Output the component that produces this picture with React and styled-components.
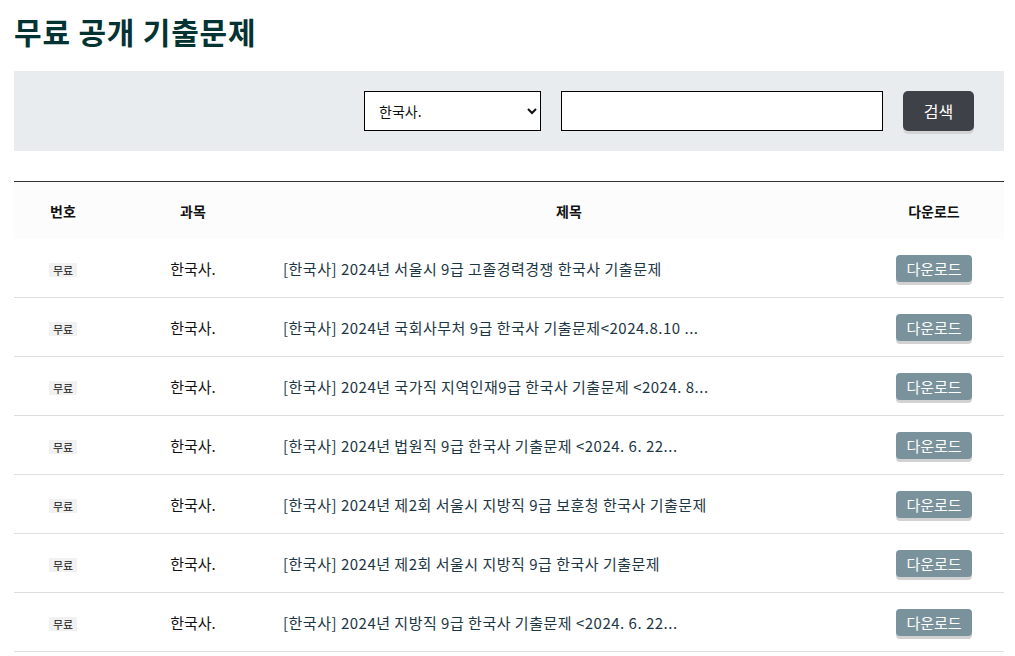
import React, { useState } from "react";
import styled, { createGlobalStyle } from "styled-components";

const GlobalStyle = createGlobalStyle`
  body {
    margin: 0;
    background: #fff;
    font-family: "Noto Sans CJK KR", "Noto Sans", sans-serif;
    color: #111;
  }
`;

const Page = styled.div`
  padding: 11px 11px 0 14px;
`;

const Title = styled.h1`
  margin: 0 0 20px 0;
  font-size: 30px;
  line-height: 40px;
  font-weight: 700;
  color: #033333;
  letter-spacing: 0.8px;
`;

const SearchBar = styled.form`
  display: flex;
  justify-content: flex-end;
  align-items: center;
  gap: 20px;
  height: 80px;
  padding: 0 30px 0 0;
  background: #e9ecef;
`;

const Select = styled.select`
  width: 177px;
  height: 40px;
  padding: 0 10px;
  border: 1px solid #000;
  border-radius: 0;
  background: #fff;
  font-family: inherit;
  font-size: 14px;
  color: #111;
`;

const SearchInput = styled.input`
  box-sizing: border-box;
  width: 322px;
  height: 40px;
  border: 1px solid #000;
  background: #fff;
`;

const SearchButton = styled.button`
  width: 71px;
  height: 40px;
  border: none;
  border-radius: 5px;
  background: #3f4148;
  color: #fff;
  font-family: inherit;
  font-size: 16px;
  box-shadow: 0 3px 0 #d4d4d4;
`;

const Table = styled.table`
  width: 100%;
  margin-top: 30px;
  border-collapse: collapse;
  border-top: 1px solid #333;
  table-layout: fixed;
`;

const Th = styled.th`
  width: ${(p) => p.w || "auto"};
  height: 57px;
  padding: 0;
  background: #fcfcfc;
  font-size: 14px;
  font-weight: 700;
  color: #111;
  text-align: center;
`;

const Tr = styled.tr`
  border-bottom: 1px solid #dedede;
`;

const Td = styled.td`
  height: 58px;
  padding: 0;
  text-align: ${(p) => p.align || "center"};
  font-size: 15px;
  font-weight: 400;
  color: #111;
`;

const Badge = styled.span`
  display: inline-block;
  padding: 0 4px;
  background: #f1f1f1;
  font-size: 11px;
  line-height: 14px;
  color: #111;
`;

const Link = styled.a`
  display: block;
  padding-left: 9px;
  font-size: 15px;
  letter-spacing: 0.5px;
  color: #1c3644;
  text-decoration: none;
  white-space: nowrap;
  overflow: hidden;
`;

const DownloadButton = styled.button`
  height: 27px;
  padding: 0 10px;
  border: none;
  border-radius: 4px;
  background: #7a929c;
  color: #fff;
  font-family: inherit;
  font-size: 15px;
  line-height: 27px;
  box-shadow: 0 3px 0 #d2d2d2;
`;

const rows = [
  "[한국사] 2024년 서울시 9급 고졸경력경쟁 한국사 기출문제",
  "[한국사] 2024년 국회사무처 9급 한국사 기출문제<2024.8.10 ...",
  "[한국사] 2024년 국가직 지역인재9급 한국사 기출문제 <2024. 8...",
  "[한국사] 2024년 법원직 9급 한국사 기출문제 <2024. 6. 22...",
  "[한국사] 2024년 제2회 서울시 지방직 9급 보훈청 한국사 기출문제",
  "[한국사] 2024년 제2회 서울시 지방직 9급 한국사 기출문제",
  "[한국사] 2024년 지방직 9급 한국사 기출문제 <2024. 6. 22...",
];

export default function App() {
  const [subject, setSubject] = useState("한국사.");
  const [query, setQuery] = useState("");

  return (
    <Page>
      <GlobalStyle />
      <Title>무료 공개 기출문제</Title>
      <SearchBar onSubmit={(e) => e.preventDefault()}>
        <Select value={subject} onChange={(e) => setSubject(e.target.value)}>
          <option>한국사.</option>
          <option>국어</option>
          <option>영어</option>
        </Select>
        <SearchInput value={query} onChange={(e) => setQuery(e.target.value)} />
        <SearchButton type="submit">검색</SearchButton>
      </SearchBar>
      <Table>
        <thead>
          <tr>
            <Th w="98px">번호</Th>
            <Th w="162px">과목</Th>
            <Th>제목</Th>
            <Th w="140px">다운로드</Th>
          </tr>
        </thead>
        <tbody>
          {rows.map((title, i) => (
            <Tr key={i}>
              <Td>
                <Badge>무료</Badge>
              </Td>
              <Td>한국사.</Td>
              <Td align="left">
                <Link href="#">{title}</Link>
              </Td>
              <Td>
                <DownloadButton>다운로드</DownloadButton>
              </Td>
            </Tr>
          ))}
        </tbody>
      </Table>
    </Page>
  );
}
